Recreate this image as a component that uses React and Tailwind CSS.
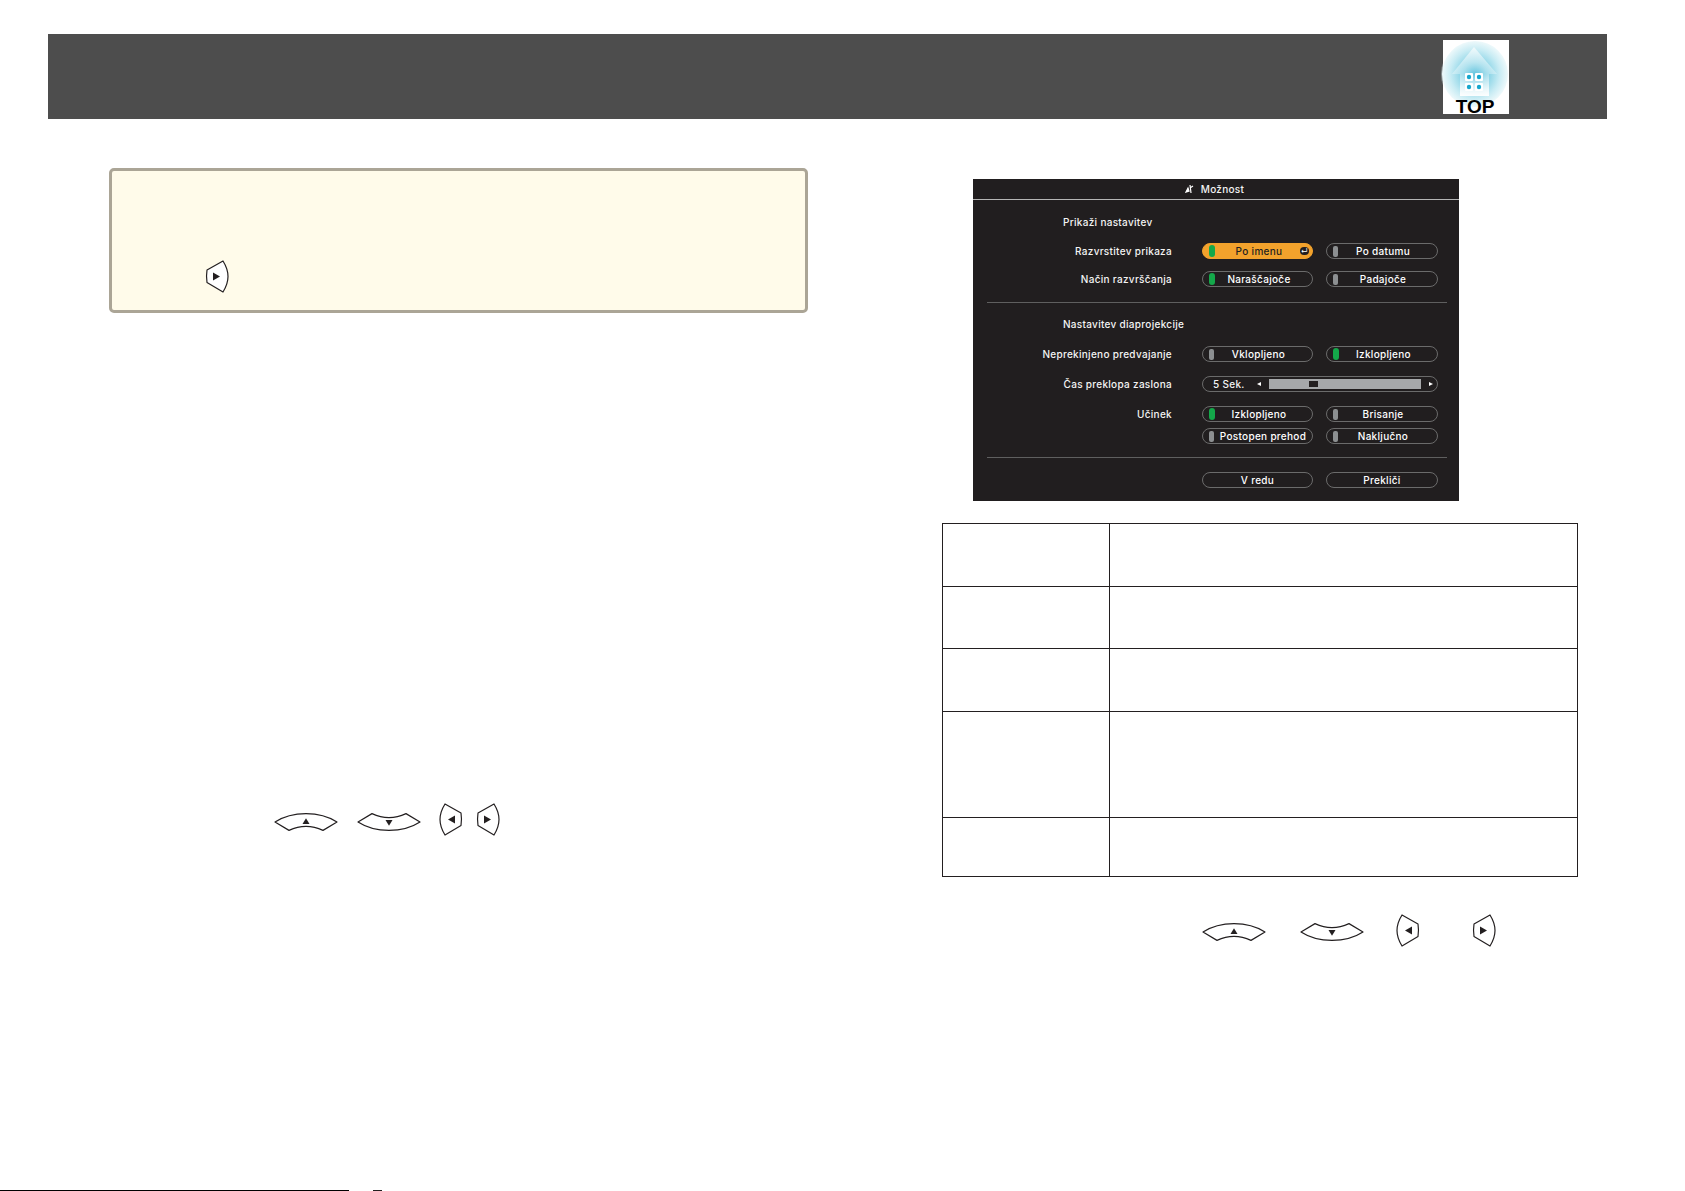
import React from "react";

const UpKey = ({ flip }) => (
  <svg width="64" height="20" viewBox="0 0 64 19" preserveAspectRatio="none" className={flip ? "-scale-y-100" : ""}>
    <path
      d="M1 9.500Q14 1.500 32 1.500T63 9.500L49 17.500Q32 10 15 17.500Z"
      fill="#fff"
      stroke="#231f20"
      strokeWidth="1.200"
      strokeLinejoin="round"
    />
    <path d="M28.500 11.500L32 6L35.500 11.500Z" fill="#231f20" />
  </svg>
);

const RightKey = ({ flip }) => (
  <svg width="24" height="33" viewBox="0 0 24 33" className={flip ? "-scale-x-100" : ""}>
    <path
      d="M18 1Q23 9 23 16.500T18 32L2 22.500Q1 16.500 2 10Z"
      fill="#fff"
      stroke="#231f20"
      strokeWidth="1.200"
      strokeLinejoin="round"
    />
    <path d="M8 12.500L15 16.500L8 20.500Z" fill="#231f20" />
  </svg>
);

const TopLogo = () => (
  <svg width="66" height="74" viewBox="0 0 66 74" className="overflow-visible">
    <defs>
      <radialGradient id="glow" cx="50%" cy="50%" r="50%">
        <stop offset="0%" stopColor="#1fabd0" />
        <stop offset="35%" stopColor="#7fd0e4" />
        <stop offset="75%" stopColor="#c9ecf4" />
        <stop offset="100%" stopColor="#eef9fb" />
      </radialGradient>
      <linearGradient id="house" x1="0" y1="0" x2="0" y2="1">
        <stop offset="0%" stopColor="#ffffff" stopOpacity="0.65" />
        <stop offset="55%" stopColor="#ffffff" stopOpacity="0.3" />
        <stop offset="100%" stopColor="#ffffff" stopOpacity="0.95" />
      </linearGradient>
    </defs>
    <circle cx="32" cy="34" r="34" fill="#e4f5f9" opacity="0.4" />
    <rect width="66" height="74" fill="#fff" />
    <circle cx="32" cy="34" r="33" fill="url(#glow)" />
    <path d="M31 7L54 34H46V56H17V34H9Z" fill="url(#house)" />
    <rect x="22" y="33" width="8" height="8" rx="1" fill="#fff" />
    <rect x="32" y="33" width="8" height="8" rx="1" fill="#fff" />
    <rect x="22" y="43" width="8" height="8" rx="1" fill="#fff" />
    <rect x="32" y="43" width="8" height="8" rx="1" fill="#fff" />
    <circle cx="26" cy="37" r="2.200" fill="#19a7cd" />
    <circle cx="36" cy="37" r="2.200" fill="#19a7cd" />
    <circle cx="26" cy="47" r="2.200" fill="#19a7cd" />
    <circle cx="36" cy="47" r="2.200" fill="#19a7cd" />
    <text
      x="32"
      y="73"
      textAnchor="middle"
      fontSize="19"
      fontWeight="700"
      fontFamily="Liberation Sans, sans-serif"
      fill="#000"
    >
      TOP
    </text>
  </svg>
);

const Led = ({ on }) => (
  <span
    className={
      on
        ? "h-[12px] w-[6px] shrink-0 rounded-full bg-[#14a84a]"
        : "h-[11px] w-[5px] shrink-0 rounded-[2px] bg-[#8c8f91]"
    }
  />
);

const PillButton = ({ label, led, on, active, tight, enter, wide }) => (
  <div
    className={`relative flex h-[16px] items-center whitespace-nowrap rounded-full border pl-[6px] ${
      wide ? "w-[112px]" : "w-[111px]"
    } ${active ? "border-[#f2a22c] bg-[#f2a22c] text-[#231f20]" : "border-[#6b6b6b] text-white"}`}
  >
    {led && <Led on={on} />}
    <span className={`flex-1 text-center ${tight ? "" : "pr-[9px]"} ${led ? "" : "pl-[3px]"}`}>{label}</span>
    {enter && (
      <span className="absolute right-[3px] flex h-[8px] w-[9px] items-center justify-center rounded-full bg-[#231f20] text-[7px] leading-none text-white">
        ↵
      </span>
    )}
  </div>
);

const Row = ({ label, className, children }) => (
  <div className={`flex items-center ${className}`}>
    <div className="w-[199px] shrink-0 text-right">{label}</div>
    <div className="ml-[30px] flex gap-[13px]">{children}</div>
  </div>
);

const OptionPanel = () => (
  <div className="ml-[31px] mt-[10px] h-[322px] w-[486px] overflow-hidden bg-[#211e1f] font-['Inter',sans-serif] text-[10px] font-medium leading-[14px] tracking-[0.3px] text-[#f4f4f4]">
    <div className="flex h-[21px] items-center justify-center gap-[7px] border-b border-[#b5b5b5] pr-[3px]">
      <svg width="9" height="10" viewBox="0 0 9 10">
        <path d="M1 8L3 4L4 7ZM5 1L6 9M5 4L8 2" stroke="#fff" strokeWidth="1.200" fill="#fff" />
      </svg>
      <span>Možnost</span>
    </div>
    <div className="ml-[90px] mt-[15px]">Prikaži nastavitev</div>
    <Row label="Razvrstitev prikaza" className="mt-[14px]">
      <PillButton label="Po imenu" led on active enter />
      <PillButton label="Po datumu" led wide />
    </Row>
    <Row label="Način razvrščanja" className="mt-[12px]">
      <PillButton label="Naraščajoče" led on />
      <PillButton label="Padajoče" led wide />
    </Row>
    <div className="ml-[14px] mr-[12px] mt-[15px] h-px bg-[#5f5f5f]" />
    <div className="ml-[90px] mt-[14px]">Nastavitev diaprojekcije</div>
    <Row label="Neprekinjeno predvajanje" className="mt-[15px]">
      <PillButton label="Vklopljeno" led />
      <PillButton label="Izklopljeno" led on wide />
    </Row>
    <Row label="Čas preklopa zaslona" className="mt-[14px]">
      <div className="flex h-[16px] w-[236px] items-center rounded-full border border-[#6b6b6b] pl-[10px]">
        <span className="w-[34px] whitespace-nowrap">5 Sek.</span>
        <span className="ml-[10px] h-0 w-0 border-y-[2.500px] border-r-[4px] border-y-transparent border-r-white" />
        <div className="ml-[8px] flex h-[10px] w-[152px] items-center bg-[#a6a8aa] pl-[40px]">
          <div className="h-[6px] w-[9px] bg-[#231f20]" />
        </div>
        <span className="ml-[8px] h-0 w-0 border-y-[2.500px] border-l-[4px] border-y-transparent border-l-white" />
      </div>
    </Row>
    <Row label="Učinek" className="mt-[14px]">
      <PillButton label="Izklopljeno" led on />
      <PillButton label="Brisanje" led wide />
    </Row>
    <Row label="" className="mt-[6px]">
      <PillButton label="Postopen prehod" led tight />
      <PillButton label="Naključno" led wide />
    </Row>
    <div className="ml-[14px] mr-[12px] mt-[13px] h-px bg-[#5f5f5f]" />
    <Row label="" className="mt-[14px]">
      <PillButton label="V redu" />
      <PillButton label="Prekliči" wide />
    </Row>
  </div>
);

const rowHeights = ["h-[63px]", "h-[62px]", "h-[63px]", "h-[106px]", "h-[59px]"];

export default function App() {
  return (
    <div className="flex h-[1191px] w-[1685px] flex-col overflow-hidden bg-white">
      <div className="ml-[48px] mt-[34px] flex h-[85px] w-[1559px] shrink-0 justify-end bg-[#4d4d4d] pr-[98px] pt-[6px]">
        <TopLogo />
      </div>

      <div className="flex flex-1 pl-[109px] pt-[49px]">
        <div className="w-[699px]">
          <div className="h-[145px] rounded-[5px] border-[3px] border-[#aba596] bg-[#fffbea] pl-[93px] pt-[89px]">
            <RightKey />
          </div>
          <div className="ml-[165px] mt-[490px] flex items-start">
            <div className="mt-[9px]">
              <UpKey />
            </div>
            <div className="ml-[19px] mt-[9px]">
              <UpKey flip />
            </div>
            <div className="ml-[18px]">
              <RightKey flip />
            </div>
            <div className="ml-[13px]">
              <RightKey />
            </div>
          </div>
        </div>

        <div className="ml-[134px] w-[636px]">
          <div className="pt-px">
            <OptionPanel />
          </div>
          <table className="mt-[22px] w-full table-fixed border-collapse">
            <tbody>
              {rowHeights.map((h, i) => (
                <tr key={i} className={h}>
                  <td className="w-[167px] border border-[#231f20]" />
                  <td className="border border-[#231f20]" />
                </tr>
              ))}
            </tbody>
          </table>
          <div className="ml-[260px] mt-[37px] flex items-start">
            <div className="mt-[8px]">
              <UpKey />
            </div>
            <div className="ml-[34px] mt-[8px]">
              <UpKey flip />
            </div>
            <div className="ml-[32px]">
              <RightKey flip />
            </div>
            <div className="ml-[52px]">
              <RightKey />
            </div>
          </div>
        </div>
      </div>

      <div className="flex h-px shrink-0 items-start">
        <div className="h-px w-[349px] bg-black" />
        <div className="ml-[24px] h-px w-[9px] bg-[#231f20]" />
      </div>
    </div>
  );
}
